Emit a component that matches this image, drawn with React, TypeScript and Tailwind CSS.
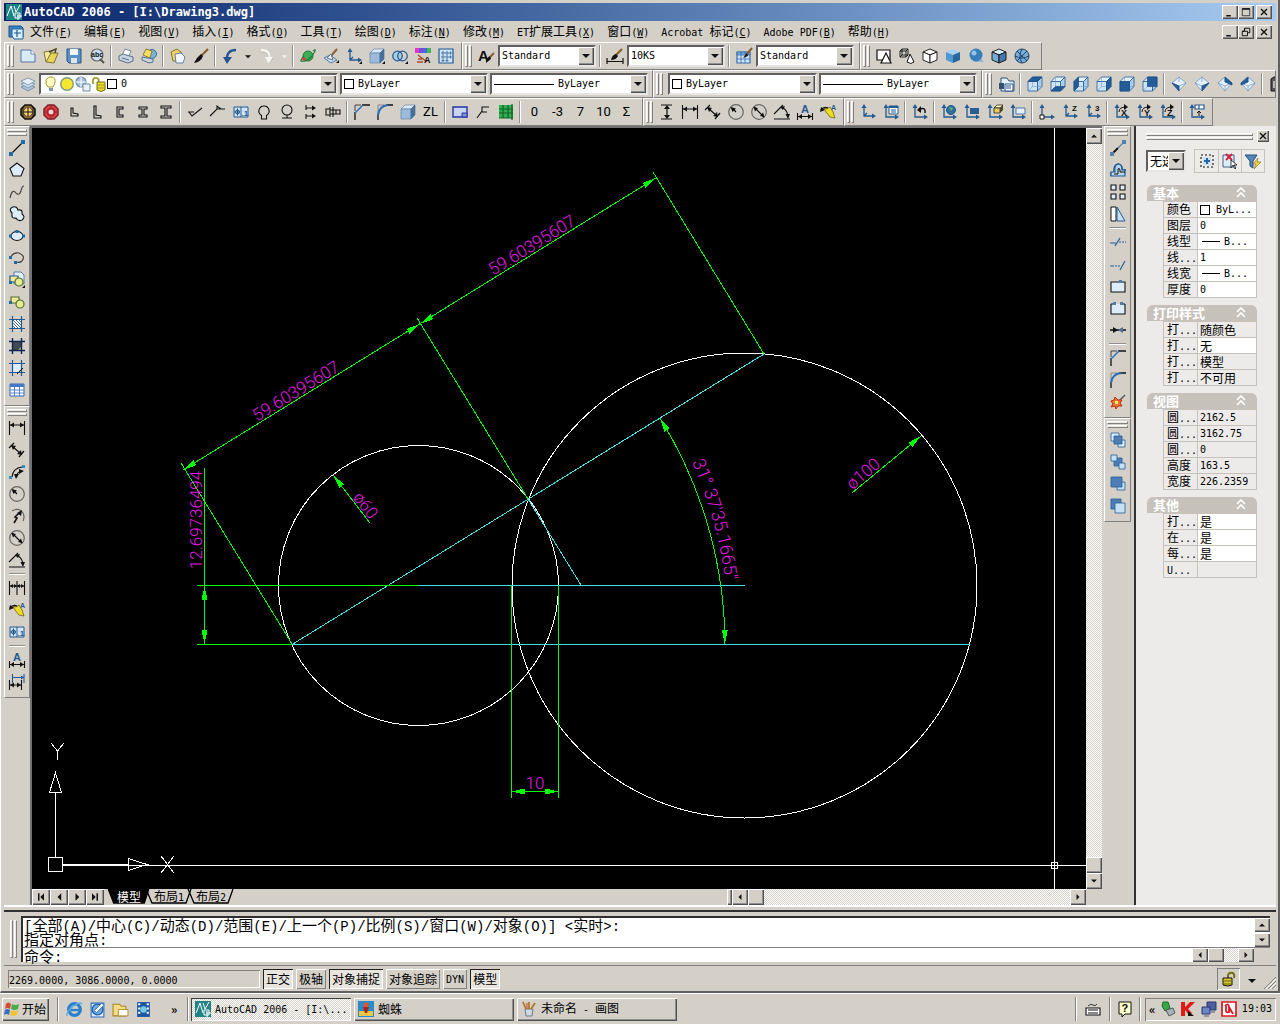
import React from "react";
import { clsx } from "clsx";

const CJK = "font-['Noto_Sans_CJK_SC',sans-serif]";
const MONO = "font-['DejaVu_Sans_Mono','Noto_Sans_CJK_SC',monospace]";
const RAISED = "bg-[#d4d0c8] shadow-[inset_1px_1px_#ffffff,inset_-1px_-1px_#505050,inset_-2px_-2px_#909090]";
const GRIP = "bg-[#ece9e3] border border-t-white border-l-white border-r-[#808080] border-b-[#808080]";
const SUNKEN = "shadow-[inset_1px_1px_#808080,inset_-1px_-1px_#ffffff]";
const DITHER = "bg-[repeating-conic-gradient(#ffffff_0_25%,#d4d0c8_0_50%)] bg-[length:2px_2px]";

/* Mixed text: Chinese at the parent's size, Latin in a narrower monospaced face. */
function T({ children, latin = "font-['DejaVu_Sans_Mono',monospace] text-[10px]" }: { children: string; latin?: string }) {
  return (
    <>
      {children.split(/([\u3000-\u9fff]+)/).map((s, i) =>
        i % 2 ? s : s ? <span key={i} className={clsx(latin, "whitespace-pre")}>{s}</span> : null
      )}
    </>
  );
}
const COMMAND_LATIN = "font-['Liberation_Mono',monospace] text-[14px]";

/* ---------- icons: [path, fill, stroke, stroke width] or a letter ---------- */
type Shape = [string, string?, string?, number?];
type Letter = { t: string; x: number; y: number; s: number; c?: string };
type Part = Shape | Letter;
const K = "#111111";
const B = "#24598f";
const D = "#235c98";
const L = "#cfe4f6";
const N = "none";
const ring = (x: number, y: number, r: number) => `M${x - r} ${y}a${r} ${r} 0 1 0 ${2 * r} 0a${r} ${r} 0 1 0 ${-2 * r} 0z`;

const ucs: Part[] = [["M4 3V12H14M4 12L7 9", N, B, 1.3], ["M4 0L6.5 4H1.500z M16 12L12 9.500V14.500z", B]];
const ucsSmall: Part[] = [["M3 3V13H14", N, B, 1.3], ["M3 0L5.500 4H.5z M16 13L12 10.500V15.500z", B]];
const box = (face: string): Part[] => [
  ["M1 5.500L5.500 1H15L10.500 5.500z", "#e4f0fa", D, 0.8],
  ["M1 5.500H10.500V15H1z", L, D, 0.8],
  ["M10.500 5.500L15 1V10.500L10.500 15z", "#a9cdec", D, 0.8],
  ["M5.500 1V10.500H15M5.500 10.500L1 15", N, "#6f9cc8", 0.6],
  [
    {
      top: "M1 5.500L5.500 1H15L10.500 5.500z",
      front: "M1 5.500H10.500V15H1z",
      right: "M10.500 5.500L15 1V10.500L10.500 15z",
      left: "M1 5.500L5.500 1V10.500L1 15z",
      bottom: "M1 15L5.500 10.500H15L10.500 15z",
      back: "M5.500 1H15V10.500H5.500z",
    }[face] ?? "",
    D,
    "#17497e",
    0.6,
  ],
];
const iso = (face: number): Part[] => [
  ["M8 1L15 7L8 15L1 7z", "#e4f0fa", "#6a96c0", 0.8],
  ["M1 7L8 10L15 7M8 10V15M8 1V6", N, "#6a96c0", 0.7],
  [["M1 7L8 10V15z", "M15 7L8 10V15z", "M8 1L15 7V9L8 6z", "M8 1L1 7V9L8 6z"][face], D, "#17497e", 0.7],
];
const cube = (top: string, left: string, right: string, line: string): Part[] => [
  ["M8 1L15 4L8 7L1 4z", top, line, 0.9],
  ["M1 4L8 7V15L1 12z", left, line, 0.9],
  ["M15 4L8 7V15L15 12z", right, line, 0.9],
];
const solid: Part[] = [["M1 5L5 1H15L11 5z", "#dceaf7", "#5f84aa", 0.7], ["M1 5H11V15H1z", "#9dbbd9", "#5f84aa", 0.7], ["M11 5L15 1V11L11 15z", "#466f9c", "#466f9c", 0.7]];
const hatch: Part[] = [["M3.500 0V16M12.500 0V16M0 3.500H16M0 12.500H16", N, B, 1.2]];
const stack = (a: string, b: string, c: string): Part[] => [["M1 1H9V9H1z", a, D, 0.8], ["M8 8H15V15H8z", b, D, 0.8], ["M4 4H12V12H4z", c, D, 0.8]];
const docket: Part[] = [["M1 3H15V13H1z", L, B, 1], ["M8 3V13M4.500 4.500V11.500M1.500 8H7", N, B, 1], [ring(4.5, 8, 2), N, B, 1], { t: ".1", x: 8.5, y: 12, s: 8, c: B }];
const jagged: Part[] = [["M4 4L7 5L10 3L13 8L15 14L10 13L6 8z", "#eedc20", "#6b6410", 0.8], ["M1 6Q4 2 8 4", N, K, 1.3], ["M0 8L1 3L5 6z", K], { t: "A", x: 11, y: 6, s: 7, c: B }];
const linear: Part[] = [["M.5 1V15M15.500 1V15M1 5H15", N, K, 1.1], ["M1 5L5 2.500V7.500zM15 5L11 2.500V7.500z", K]];
const aligned: Part[] = [["M0 6L5 1M10 15L15 9M3 4L12 12", N, K, 1.2], ["M2 3L7 4L4 8zM13 13L12 8L8 12z", K]];
const radius: Part[] = [[ring(8, 8, 7.3), N, "#666666", 1.2], ["M8 8L4 4", N, K, 1.2], ["M2.500 3L8 4.500L4.500 8z", K]];
const diameter: Part[] = [[ring(8, 8, 7.3), N, "#666666", 1.2], ["M3 3L13 13", N, K, 1.2], ["M2.500 3L7 4L4 7.500zM13.500 13L9 12L12 8.500z", K]];
const angular: Part[] = [["M0 15H16M0 10L9 1M8 3Q14 7 14 13", N, K, 1.1], ["M6 3L11 2L9 6zM14 15L11.500 10H16z", K]];
const editDim: Part[] = [{ t: "A", x: 4, y: 9, s: 11, c: B }, ["M.5 9V16M15.500 9V16M1 12.500H15", N, K, 1.1], ["M1 12.500L5 10V15zM15 12.500L11 10V15z", K]];
const chamfer: Part[] = [["M1 16V8M8 1H16", N, K, 1.3], ["M1 7V1H7", N, "#444444", 1], ["M1 9L9 1", N, "#2a6eb5", 1.5]];
const fillet: Part[] = [["M1 16V10M9 1H16", N, K, 1.3], ["M1 7V1H7", N, "#777777", 0.8], ["M1 11Q2 2 11 1", N, "#2a6eb5", 2]];
const brush: Part[] = [["M15 1L8 8", N, "#8a5a2a", 2.2], ["M8 6Q4 9 1 15Q8 14 10 8z", K]];

const ICONS: Record<string, Part[]> = {
  acad: [["M0 0H16V16H0z", "#1e8584"], ["M1 12L5 2L8 12M8 2L10 8L14 1M9 9H14V14H9zM11 12H16M12 10V16", N, "#ffffff", 1]],
  dwg: [["M1 2H13L15 4V13H1z", "#3984c6", "#1c4e80", 1], ["M4 5H15V15H6L4 12z", "#d9effb", "#20639c", 1], ["M9 6V13M6 9H13", N, B, 1.2]],
  new: [["M1 2H11L15 6V14H1z", "#d8e9f7", "#51799f", 1], ["M11 2V6H15", "#ffffff", "#51799f", 0.8]],
  open: [["M1 4L7 3L8 9L3 14z", "#f5e9a0", "#80752e", 1], ["M3 14L8 5H15L11 15z", "#e8d35b", "#80752e", 1], ["M6 4L13 1L12 5", N, "#4d4720", 1.4]],
  save: [["M1 1H15V15H3L1 13z", "#5c91c5", "#285381", 1], ["M4 1H12V7H4z", "#f1f6fa"], ["M5 10H11V15H5z", "#dce5ed"]],
  preview: [[ring(8, 7, 6), "#cbdeef", "#686868", 1.2], ["M11 11L15 15", N, "#555555", 2], { t: "abc", x: 2, y: 9, s: 7 }],
  print: [["M4 7L7 1L13 3L11 8z", "#ffffff", "#758ba3", 1], ["M1 8L5 6L15 9V13L10 15L1 12z", "#c9d6e2", "#58718c", 1], ["M4 10L11 12", N, "#58718c", 1]],
  publish: [[ring(11, 6, 4.5), "#78b3df", "#316e9e", 1], ["M2 7L5 1L11 3L9 10z", "#f6df64", "#8e7d26", 1], ["M1 9L12 11V14L8 15L1 12z", "#c9d6e2", "#58718c", 1]],
  paste: [["M1 4L7 1L12 5L9 13L3 13z", "#edd268", "#84712e", 1], ["M5 6L11 5L15 9L13 15H6z", "#eff5fa", "#6885a0", 1]],
  match: brush,
  undo: [["M14 2Q4 2 5 13", N, "#27558e", 2.5], ["M1 9H10L5 16z", "#27558e"]],
  redo: [["M3 2Q13 2 11 13", N, "#f6f5f2", 2.5], ["M7 9H15L11 16z", "#f6f5f2"], ["M3 4Q10 4 10 9M11 16L15 10", N, "#b5b1a9", 0.8]],
  drop: [["M4 7H12L8 11z", K]],
  dropOff: [["M5 7H12L8.500 11z", "#f3f1ed"]],
  orbit: [[ring(8, 8, 5), "#3dae57", "#247b3a", 1], ["M2 13Q-1 14 4 8M13 3Q18 -1 12 8Q7 14 2 13", N, "#1f7a39", 1.2], [ring(4, 11, 1.7), "#d04434"]],
  layerbrush: [["M1 10L7 7L14 12L8 15z", "#c9dff1", "#54799e", 1], ["M14 1L8 8", N, "#8a6230", 2], ["M8 6L4 10L10 12z", "#e7eef4", "#64788d", 1], ["M13 15H16V12z", K]],
  ucs: [...ucs, ["M13 16H16V13z", K]],
  solid: [...solid, ["M13 16H16V13z", K]],
  venn: [[ring(5.5, 8, 4.8), "#a9c9e5", B, 1.2], [ring(10.5, 8, 4.8), N, B, 1.2], ["M13 16H16V13z", K]],
  palette: [["M0 0H4V5H0z", "#df38c2"], ["M4 0H8V5H4z", "#7e45df"], ["M8 0H12V5H8z", "#3f6be8"], ["M12 0H16V5H12z", "#48b64e"], ["M3 7L12 14M3 11H7M2 14H8", N, "#a54b2c", 1.4], { t: "A", x: 9, y: 15, s: 9 }],
  calc: [["M1 1H15V15H1z", L, B, 1.2], ["M4 4H6V6H4zM8 4H10V6H8zM12 4H13V6H12zM4 8H6V10H4zM8 8H10V10H8zM8 12H10V13H8zM12 8H13V10H12zM4 12H6V13H4z", "#ffffff", B, 0.8]],
  textstyle: [{ t: "A", x: 0, y: 13, s: 15 }, ["M16 5L11 10", N, "#8c5c2e", 2], ["M12 8L8 11L8 15L13 11z", K]],
  dimstyle: [["M0 10V16M16 10V16M0 13.500H16", N, K, 1.2], ["M15 1L8 8", N, "#8c5c2e", 2.2], ["M9 6Q5 7 4 12Q9 12 11 8z", K]],
  tablestyle: [["M1 4H14V15H1z", L, "#386da8", 1.2], ["M1 4H14V7H1zM5 4V15M9 4V15M1 11H14", "#77a6d4", "#386da8", 0.8], ["M16 0L10 7", N, "#8c5c2e", 2], ["M11 5L7 10L12 8z", K]],
  wf2d: [["M1 2H14V12H1z", "#ffffff", K, 1.2], ["M5 15L10 5L15 15z", "#ffffff", K, 1.2]],
  wf3d: [["M1 3H7V9H1zM3 1H9V7H3zM1 3L3 1M7 3L9 1M7 9L9 7M1 9L3 7", N, K, 0.9], ["M8 14L11 6L15 14Q12 17 8 14z", "#ffffff", K, 1]],
  hidden: cube("#ffffff", "#ffffff", "#ffffff", K),
  flat: cube("#a8d0f0", "#4f98d4", "#28679f", N),
  gouraud: [["M6 14H16L13 10z", "#94b9d7"], [ring(8, 7, 6.5), "#387eb8"], [ring(6, 5, 2.5), "#8fc4e8"]],
  flatedge: cube("#d7eafa", "#76a8d8", "#4678ae", K),
  gouraudedge: [[ring(8, 8, 7), "#78add5", "#20476b", 1], ["M3 3L13 13M13 3L3 13M8 1Q4 8 8 15M1 8Q8 12 15 8", N, "#20476b", 1]],
  layers: [["M1 11L8 8L15 11L8 15z", "#afc4d8", "#6b8caa", 0.8], ["M1 8L8 5L15 8L8 12z", "#cfdeea", "#6b8caa", 0.8], ["M1 5L8 2L15 5L8 9z", "#e8f1f7", "#6b8caa", 0.8]],
  bulb: [["M5 11Q2 8 3 4Q5 0 9 1Q13 2 12 6Q12 8 10 11z", "#fffbc2", "#a29a34", 1], ["M6 12H10V15H6z", "#8595a8"]],
  sun: [[ring(8, 8, 6.3), "#f5e632", "#7c9b86", 1.4]],
  vp: [[ring(6, 6, 5), "#a7c2d8", "#6b8ba5", 1.2], ["M6 1V11M1 6H11", N, "#ffffff", 1], ["M8 8H15V15H8z", "#e9f1f7", "#6b8ba5", 1]],
  lock: [["M2 8V4Q3 1 6 2Q9 3 7 7", N, "#9d941f", 1.7], ["M6 6H14V14Q10 17 6 14z", "#e8dc2e", "#777018", 1], ["M6 9H14M6 12H14", N, "#918818", 0.8]],
  views: [["M3 2H9L11 5H16V15H3z", "#e4f0fa", "#2e527b", 1], ["M1 7H6V13H1z", "#35516e"], ["M7 8H15V15H7zM8 10H13M8 12H13", "#ffffff", B, 1]],
  vTop: box("top"), vBottom: box("bottom"), vLeft: box("left"), vRight: box("right"), vFront: box("front"), vBack: box("back"),
  sw: iso(0), se: iso(1), ne: iso(2), nw: iso(3),
  camera: [["M2 3L5 1H9V12L6 15H2z", "#555555", K, 1], ["M4 5H6V12H4z", "#b5b5b5"]],
  gearA: [["M5 1H11L15 5V11L11 15H5L1 11V5z", "#8d7038", K, 1.6], [ring(8, 8, 4.5), "#f6d481", "#6b4612", 1], ["M8 4V12M4 8H12", N, K, 1], ["M3 3V13M13 3V13", N, K, 0.8]],
  gearB: [["M5 1H11L15 5V11L11 15H5L1 11V5z", "#d94047", "#7c242a", 1.5], [ring(8, 8, 3.5), "#e8d8d4", "#b21e26", 2], ["M8 0V5M8 11V16M0 8H4M12 8H16", N, "#8b2428", 0.8]],
  angleS: [["M5 4V12H12V10L7 9V4z", N, K, 1.1]],
  angleL: [["M5 2V14H12V12L7 11V2z", N, K, 1.1]],
  channel: [["M11 3H5V13H11V11H7V5H11z", N, K, 1.1]],
  beam: [["M4 3H12V5H9V11H12V13H4V11H7V5H4z", N, K, 1.1]],
  beamW: [["M3 2H13V4H9V12H13V14H3V12H7V4H3z", N, K, 1.1]],
  rough: [["M1 8H7M2 8L5 12L15 4", N, K, 1.1]],
  weld: [["M0 12L7 5H15M7 5V2L11 5", N, K, 1.1]],
  tol: docket,
  balloon: [["M5.500 11.500Q2 9 3 6Q4 2 8 2Q12 2 13 6Q14 9 10.500 11.500V15H5.500z", N, K, 1.1]],
  balloon2: [[ring(8, 6, 5), N, K, 1.1], ["M8 11V14M3 14H13", N, K, 1.1]],
  section: [["M4 1V6M4 10V15M4 4H11M4 12H11", N, K, 1.1], ["M14 4L10 1.500V6.500zM14 12L10 9.500V14.500z", K]],
  bolt: [["M1 5H5V11H1zM5 3V13M8 3V13M5 6H15V10H5M11 6V10", N, K, 1.1]],
  chamfer, fillet, block: solid,
  sheet: [["M1 3H15V13H1z", "#c8d5f2", "#2733aa", 1.4], ["M10 9H15V13H10z", "#8295d8", "#2733aa", 1]],
  leader: [["M2 14L7 7V3H14M7 8H12", N, K, 1.1]],
  bom: [["M1 1H15V14H1z", "#2db04e"], ["M1 5H15M1 9H15M5 1V14M10 1V14M14 0V16M1 14H15", N, "#135f2a", 1.2]],
  vdim: [["M2 1H13M2 15H13M8 2V14", N, K, 1.2], ["M8 1L5 5H11zM8 15L5 11H11z", K]],
  linear, aligned, radius, diameter, angular, editDim, jagged,
  axes: ucs,
  ucsDialog: [...ucsSmall, ["M6 2H15V10H6zM8 6H13M8 8H13", "#ffffff", B, 1], ["M6 2H15V4H6z", B]],
  ucsPrev: [...ucsSmall, ["M13 9Q14 3 8 5", N, K, 1.5], ["M5 6L9 2V9z", K]],
  ucsWorld: [...ucsSmall, [ring(10, 6, 4.5), "#2f6f9b", B, 1], ["M8 3L12 4L10 7z", "#56b478"]],
  ucsObject: [...ucsSmall, ["M6 4H15V10H6z", "#2a5d93"]],
  ucsFace: [...ucsSmall, ["M7 4L10 1H16L13 4z", "#fff6bb", K, 0.7], ["M7 4H13V9H7z", "#e7ca61", K, 0.7], ["M13 4L16 1V6L13 9z", "#4d4629"]],
  ucsView: [...ucsSmall, ["M6 4H15V10H6z", "#e4f0fa", "#4e789f", 1]],
  ucsOrigin: [...ucsSmall, ["M1 11H5V15H1z", "#ffffff", K, 1]],
  ucsZ: [...ucs, { t: "Z", x: 10, y: 7, s: 8 }],
  ucs3: [...ucs, { t: "3", x: 10, y: 7, s: 8 }],
  rotX: [...ucsSmall, ["M5 8Q5 3 12 3", N, K, 1], ["M14 3L10 0V6z", K], { t: "X", x: 7, y: 12, s: 9 }],
  rotY: [...ucsSmall, ["M5 8Q5 3 12 3", N, K, 1], ["M14 3L10 0V6z", K], { t: "Y", x: 7, y: 12, s: 9 }],
  rotZ: [...ucsSmall, ["M5 8Q5 3 12 3", N, K, 1], ["M14 3L10 0V6z", K], { t: "Z", x: 7, y: 12, s: 9 }],
  ucsApply: [...ucsSmall, ["M6 1H15V5H6zM10 1V5", "#ffffff", B, 1.2], ["M10 12V7M8 9L10 7L12 9", N, K, 1]],
  line: [["M2 14L14 2", N, K, 1.2], ["M0 12H4V16H0zM12 0H16V4H12z", "#1b6fa4"]],
  polygon: [["M8 1L15 6.500L12 14H4L1 6.500z", "#dcecf9", K, 1.1]],
  spline: [["M1 14Q3 5 6 8Q10 13 12 7Q13 2 15 2", N, "#444444", 1.2]],
  cloud: [["M3 7Q-1 3 4 1Q8 0 9 4Q14 3 13 8Q17 11 13 14Q9 16 7 12Q2 13 3 7z", "#dcecf9", K, 1.1]],
  ellipse: [["M2 8a6 4.500 0 1 0 12 0a6 4.500 0 1 0 -12 0z", "#dcecf9", K, 1.1], ["M0 6.500H3V9.500H0zM13 6.500H16V9.500H13zM6.500 2H9.500V5H6.500z", "#1b6fa4"]],
  ellarc: [["M2 7Q4 2 10 3Q17 6 13 11Q11 13 7 12", N, "#444444", 1.2], ["M0 6H3V9H0zM5 11H8V14H5z", "#1b6fa4"]],
  insert: [["M5 0H12L15 3V12H5z", "#e5eff8", "#5a7e9e", 1], ["M1 4H9V10H1z", "#f2e79a", B, 1.2], [ring(10, 10, 4), "#e4eb94", "#52752c", 1.2], ["M0 9H3V12H0z", "#1b6fa4"], ["M13 16H16V13z", K]],
  makeblock: [["M2 3H10V9H2z", "#f2e79a", "#52752c", 1.2], [ring(11, 10, 4), "#e4eb94", "#52752c", 1.2], ["M0 7H3V10H0z", "#1b6fa4"]],
  hatch: [["M3.500 3.500H12.500V12.500H3.500z", "#ffffff"], ["M4 4L12 12M7 4L12 9M4 7L9 12M10 4L12 6M4 10L6 12", N, "#28598d", 0.9], ...hatch],
  gradient: [["M3 3H13V13H3z", "#424b53"], ["M8 13L13 8V13z", "#b5bd7c"], ["M3.500 0V16M12.500 0V16M0 3.500H16M0 12.500H16", N, "#10254f", 1.4]],
  region: [["M3.500 3.500H12.500V8L8 12.500H3.500z", "#dcecf9"], ...hatch, ["M8 14L14 8", N, K, 1]],
  table: [["M1 2H15V14H1z", "#ffffff", "#3566b5", 1], ["M1 2H15V5H1z", "#4778c6"], ["M1 8H15M1 11H15M5.500 5V14M10.500 5V14", N, "#5b86c8", 1]],
  arclen: [["M3 13Q4 4 13 3M7 13Q8 8 13 7", N, K, 1.2], ["M0 12H3V15H0zM13 1H16V4H13z", "#2f8ec5"], ["M7 15L5 10H10zM15 7L10 5V10z", K]],
  jogged: [["M3 3Q10 -1 14 5Q16 9 14 13", N, "#666666", 1.2], ["M5 15L8 10L6 9L10 5", N, K, 1.6], ["M13 2L12 8L8 5z", K]],
  baseline: [["M.5 1V15M8 1V15M15.500 1V15M1 6H15", N, K, 1.1], ["M1 6L4 4V8zM8 6L5 4V8zM8 6L11 4V8zM15 6L12 4V8z", K]],
  dimupdate: [["M3.500 0V9M15 0V9M4 3.500H15", N, B, 1.1], ["M.5 6V16M12.500 6V16M1 11H12", N, K, 1.1], ["M1 11L5 8.500V13.500zM12 11L8 8.500V13.500z", K], ["M15 3.500L12 1.500V5.500z", B]],
  lengthen: [["M2 14L8 8", N, K, 1.8], ["M8 8L14 2", N, "#5580aa", 1.3], ["M0 12H4V16H0zM12 0H16V4H12z", "#5580aa"]],
  offset: [["M1 14V11H4Q3 3 8 2Q13 3 12 8H16", N, B, 1.4], ["M1 14V10H5Q4 3 8 2Q12 2 12 8H15V14z", "#b6d5ef", B, 1.2], ["M4 12H8V7Q9 5 10 8V10H15", N, K, 1]],
  array: [["M1 1H6V6H1zM10 1H15V6H10zM1 10H6V15H1zM10 10H15V15H10z", "#dcecf9", K, 1.1]],
  mirror: [["M1 1H6V15H1z", "#ffffff", K, 1], ["M7 1L15 15H7z", "#c5dff3", B, 1]],
  trim: [["M0 9H6M5 12L10 4", N, "#245f9b", 1.2], ["M9 8H11M12 8H14M15 8H16", N, B, 1.2]],
  extend: [["M0 10H4M5 10H7M8 10H10M10 14L15 5", N, "#245f9b", 1.2]],
  breakpt: [["M1 4H15V14H1z", "#dcecf9", K, 1.1], ["M9 2H12V5H9z", "#4f7eae"]],
  break: [["M1 4V14H15V4", "#dcecf9", K, 1.1], ["M1 4H4M12 4H15", N, K, 1], ["M3 2H6V5H3zM10 2H13V5H10z", "#4f7eae"]],
  join: [["M0 8H16", N, K, 1.5], ["M8 8L3 5V11z", K], ["M8 8L13 5V11z", "#4c7099"]],
  explode: [["M9 7L15 1", N, "#555555", 1.5], ["M1 7L4 6L5 3L8 6L12 6L10 9L12 12L8 12L6 15L5 12L1 13L3 10z", "#ed752e", "#b72d18", 1], ["M5 7H8V10H5z", "#ffe56a"]],
  front: stack("#dcecf9", "#dcecf9", "#4f7eb5"),
  back: [["M4 4H12V12H4z", "#4f7eb5", D, 0.8], ["M1 1H7V7H1zM9 9H15V15H9z", "#c5dff3", D, 0.8]],
  above: [["M7 6H15V14H7z", "#c5dff3", D, 0.8], ["M1 1H12V11H1z", "#4f7eb5", D, 0.8]],
  under: [["M1 1H11V11H1z", "#4f7eb5", D, 0.8], ["M5 5H15V15H5z", "#c5dff3", D, 0.8]],
  pickadd: [["M2 2H4M6 2H8M10 2H12M14 2V4M14 6V8M14 10V12M14 14H12M10 14H8M6 14H4M2 14V12M2 10V8M2 6V4", N, K, 1.1], ["M4 4H12V12H4z", "#cce2f4"], ["M8 5V11M5 8H11", N, "#1e68a8", 2]],
  select: [["M1 2H12V14H1z", "#dcecf9", "#44617f", 1], ["M4 1L10 7M10 1L4 7", N, "#d51e37", 1.8], ["M9 7V15L11 12L13 16L14 15L12 12H15z", "#ffffff", K, 0.8]],
  filter: [["M0 2H12L8 8V15L5 13V8z", "#5685b8", "#244c79", 1], ["M13 5L8 11H11L9 16L16 9H12z", "#f3d63e", "#8d7722", 0.7]],
  start: [["M2 3Q4 0 7 3L6 8Q3 6 1 8z", "#d54a31"], ["M8 3Q11 5 15 3L14 8Q10 10 7 8z", "#4bac4d"], ["M1 9Q3 7 6 9L5 14Q2 12 0 14z", "#356cc8"], ["M7 9Q10 11 14 9L13 14Q9 16 6 14z", "#f1c33a"]],
  ie: [[ring(8, 8, 5.5), N, "#2a80cd", 3], ["M4 8.500H13", N, "#2a80cd", 2.2], ["M1 14Q0 10 7 5Q14 0 15 3", N, "#5aaee8", 1.3]],
  outlook: [["M2 2H14V15H2z", "#dceafb", "#2a70bf", 1], [ring(8, 8, 5), "#6eb0e6", "#1f5fa8", 1.2], ["M5 9L12 2L14 4L7 11z", "#ffffff", "#1f5fa8", 0.8]],
  folder: [["M1 3H7L9 5H13V14H1z", "#f7dc85", "#a88525", 1], ["M6 8H15V14H6z", "#ffffff", "#a88525", 0.8]],
  film: [["M2 1H14V15H2z", "#1c569e"], ["M3 2H5V4H3zM3 6H5V8H3zM3 10H5V12H3zM11 2H13V4H11zM11 6H13V8H11zM11 10H13V12H11z", "#ffffff"], [ring(8, 8, 3), "#74c9f0"]],
  spider: [["M0 0H16V16H0z", "#2b8bc4"], ["M1 10H15V15H1z", "#f0c643"], [ring(8, 4, 2.5), "#e9552c"], ["M5 6H11L9 12H7z", "#a82522"]],
  paint: [["M4 8H12L11 15H5z", "#ced9e2", "#6a7b8b", 1], ["M5 8L2 1M8 8V1M10 8L14 2", N, "#b2762b", 1.8], ["M6 8L6 2", N, "#d05738", 1.2]],
  keyboard: [["M1 7H15V14H1z", "#ffffff", K, 1.1], ["M3 9H13M3 12H13", N, K, 1], ["M3 5Q6 2 8 4Q10 6 12 3", N, K, 0.8]],
  help: [["M2 1H14V13H8L5 16V13H2z", "#ffffcc", K, 1], { t: "?", x: 4.5, y: 11, s: 11 }],
  usb: [["M3 1H8L10 7L5 10L2 5z", "#37a947", "#1e6830", 1], ["M6 9L13 7L15 12L9 15z", "#a9b1b7", "#525b61", 1]],
  kav: [["M1 1H5V6L10 1H15L8 8L12 12L9 14L5 9V15H1z", "#df1919"], ["M8 10L14 15H8z", K]],
  net: [["M6 1H15V9H6z", "#4c5fa4", "#2c366a", 1], ["M1 6H9V13H1z", "#6b85c8", "#2c366a", 1], ["M3 15H8M10 11H14", N, "#555f79", 1.2]],
  rising: [["M1 1H15V15H1z", "#ffffff", "#d91a25", 1.7], ["M4 5Q8 1 8 7V12M8 6L12 13M5 5V10Q5 12 8 11", N, "#d91a25", 1.8]],
  padlock: [["M7 8V4Q8 1 12 2Q14 4 13 7", N, "#77701b", 2], ["M2 7H11V14Q7 16 2 14z", "#d9cb28", K, 1], ["M2 10H11M2 13H11", N, "#665f12", 1]],
  chevrons: [["M4 7L8 3L12 7M4 12L8 8L12 12", N, "#ffffff", 1.6]],
  min: [["M3 12H9V14H3z", K]],
  max: [["M3 3.500H13V13H3z", N, K, 1], ["M3 3H13V5H3z", K]],
  restore: [["M6 3H13V9H10V13H3V7H6zM3 7H10V9M6 7V3", N, K, 1.3]],
  close: [["M4 4L12 12M12 4L4 12", N, K, 1.8]],
  up: [["M4 10H12L8 6z", K]],
  down: [["M4 6H12L8 10z", K]],
  left: [["M10 4V12L6 8z", K]],
  right: [["M6 4V12L10 8z", K]],
  first: [["M4 3H6V13H4zM12 3V13L7 8z", K]],
  last: [["M10 3H12V13H10zM4 3V13L9 8z", K]],
  prev: [["M11 3V13L6 8z", K]],
  next: [["M6 3V13L11 8z", K]],
};

function Icon({ name, className = "size-4" }: { name: string; className?: string }) {
  return (
    <svg viewBox="0 0 16 16" className={clsx("shrink-0 overflow-visible", className)} aria-hidden="true">
      {ICONS[name].map((p, i) =>
        Array.isArray(p) ? (
          <path key={i} d={p[0]} fill={p[1] ?? N} stroke={p[2] ?? N} strokeWidth={p[3] ?? 1} />
        ) : (
          <text key={i} x={p.x} y={p.y} fontSize={p.s} fill={p.c ?? K} fontWeight="bold" fontFamily="Liberation Sans, sans-serif">{p.t}</text>
        )
      )}
    </svg>
  );
}

/* ---------- toolbars ---------- */
function Bar({ children, vertical = false, grow = false }: { children: React.ReactNode; vertical?: boolean; grow?: boolean }) {
  return (
    <div
      className={clsx(
        "flex items-center border border-t-white border-l-white border-r-[#808080] border-b-[#808080]",
        vertical ? "w-full flex-col pb-1" : "h-7 pr-1",
        grow ? "min-w-0 flex-1 overflow-hidden" : "shrink-0"
      )}
    >
      <div className={clsx("flex shrink-0 gap-px", vertical ? "h-[10px] w-full flex-col px-0.5 pt-0.5" : "h-full w-[11px] py-0.5 pl-0.5")}>
        <i className={clsx(GRIP, vertical ? "h-[3px]" : "w-[3px]")} />
        <i className={clsx(GRIP, vertical ? "h-[3px]" : "w-[3px]")} />
      </div>
      {children}
    </div>
  );
}

/* "|" is a separator; a leading "=" makes a text button. */
function Tools({ items, vertical = false }: { items: string; vertical?: boolean }) {
  return (
    <>
      {items.split(" ").map((n, i) =>
        n === "|" ? (
          <i key={i} className={clsx("flex shrink-0 items-center justify-center", vertical ? "h-1.5 w-full px-1" : "h-full w-1.5 py-0.5")}>
            <i className={clsx(vertical ? "h-0.5 w-full border-t border-b border-t-[#909090] border-b-white" : "h-full w-0.5 border-r border-l border-l-[#909090] border-r-white")} />
          </i>
        ) : (
          <button
            key={i}
            type="button"
            aria-label={n.replace("=", "")}
            className={clsx("flex shrink-0 items-center justify-center", vertical ? "h-[22px] w-6" : n.startsWith("drop") ? "h-6 w-[13px]" : "h-6 w-[23px]")}
          >
            {n.startsWith("=") ? <span className="font-['Roboto',sans-serif] text-[13px] leading-4">{n.slice(1)}</span> : <Icon name={n} className={n.startsWith("drop") ? "size-3" : "size-4"} />}
          </button>
        )
      )}
    </>
  );
}

const Swatch = () => <i className="size-[10px] shrink-0 border border-black bg-white" />;
const Rule = () => <i className="h-px w-[60px] shrink-0 bg-black" />;

function Combo({ value, label, className, pre, cjk = false }: { value: string; label: string; className: string; pre?: React.ReactNode; cjk?: boolean }) {
  return (
    <div className={clsx("flex h-[22px] shrink-0 items-center border-2 border-t-[#606060] border-l-[#606060] border-r-[#e8e6e2] border-b-[#e8e6e2] bg-white pl-0.5", className)}>
      {pre && <span className="mr-1 flex shrink-0 items-center">{pre}</span>}
      <select aria-label={label} className={clsx("h-full min-w-0 flex-1 appearance-none bg-white", cjk ? "font-['Noto_Sans_CJK_SC',sans-serif] text-[12px]" : "font-['DejaVu_Sans_Mono',monospace] text-[10px]")}>
        <option>{value}</option>
      </select>
      <span className={clsx("pointer-events-none flex h-full w-4 shrink-0 items-center justify-center", RAISED)}>
        <Icon name="down" className="size-4" />
      </span>
    </div>
  );
}

function Btn({ icon, label, className = "size-4" }: { icon?: string; label: string; className?: string }) {
  return (
    <button type="button" aria-label={label} className={clsx("flex shrink-0 items-center justify-center", RAISED, className)}>
      {icon && <Icon name={icon} className="size-3" />}
    </button>
  );
}

/* ---------- drawing ---------- */
function arrow(x: number, y: number, deg: number) {
  return <path key={`${x},${y},${deg}`} d="M0 0L-14 -3V3z" fill="#00ff00" transform={`translate(${x} ${y}) rotate(${deg})`} />;
}

function Drawing() {
  return (
    <svg viewBox="32 128 1054 761" className="h-full w-full" fill="none" shapeRendering="crispEdges" role="img" aria-label="模型空间">
      <g stroke="#ffffff">
        <circle cx="418.5" cy="585.5" r="140" />
        <circle cx="744.5" cy="585.5" r="232.500" />
        <path d="M1054.500 127V890M62 865.500H1087M1051.500 862.500h6v6h-6zM48.500 857.500h14v14h-14zM55.500 857V792M62 864.500H129M49.500 792.500H61.500L55.500 773zM128.500 858.500V870.500L147 864.500zM51 743L57.500 751L64 743M57.500 751V760M161 856L174 873M174 856L161 873" />
      </g>
      <path stroke="#40e0e0" d="M292 644.500L764 354M292 644.500H970M528 499L581 585M418 585.500H745" />
      <path
        stroke="#00ff00"
        d="M197 585.500H418M197 644.500H292M204.500 468V644M181 463L292 644M183 470L656 178M417 318L528 499M653 172L764 354M511.500 585V798M558.500 585V798M511 791.500H558M333 475L370 523M921 436L852 493M660 418A432 432 0 0 1 725 644"
      />
      {arrow(183, 470, 148)}
      {arrow(420, 324, -32)}
      {arrow(420, 324, 148)}
      {arrow(656, 178, -32)}
      {arrow(204.5, 586, -90)}
      {arrow(204.5, 644, 90)}
      {arrow(511, 791.5, 180)}
      {arrow(559, 791.5, 0)}
      {arrow(333, 475, -128)}
      {arrow(921, 436, -40)}
      {arrow(660, 418, -120)}
      {arrow(725, 644, 89)}
      <path id="angle-baseline" d="M692 462A437 437 0 0 1 729 644" />
      <g fill="#e619e6" fontFamily="Roboto, sans-serif" fontWeight="300" fontSize="17" textAnchor="middle">
        <text transform="translate(299 396) rotate(-31.600)">59.60395607</text>
        <text transform="translate(535 250) rotate(-31.600)">59.60395607</text>
        <text transform="translate(202 520) rotate(-90)">12.69736494</text>
        <text transform="translate(361 509) rotate(52)">ø60</text>
        <text transform="translate(867 478) rotate(-40)">ø100</text>
        <text x="535" y="789">10</text>
        <text textAnchor="start" fontSize="18"><textPath href="#angle-baseline">31° 37'35.1665"</textPath></text>
      </g>
    </svg>
  );
}

/* ---------- properties palette ---------- */
type Row = [string, string, boolean, ("swatch" | "line")?];
const GROUPS: { title: string; rows: Row[] }[] = [
  { title: "基本", rows: [["颜色", "ByL...", true, "swatch"], ["图层", "0", true], ["线型", "B...", true, "line"], ["线...", "1", true], ["线宽", "B...", true, "line"], ["厚度", "0", true]] },
  { title: "打印样式", rows: [["打...", "随颜色", false], ["打...", "无", true], ["打...", "模型", false], ["打...", "不可用", false]] },
  { title: "视图", rows: [["圆...", "2162.5", false], ["圆...", "3162.75", false], ["圆...", "0", false], ["高度", "163.5", false], ["宽度", "226.2359", false]] },
  { title: "其他", rows: [["打...", "是", true], ["在...", "是", true], ["每...", "是", true], ["U...", "", false]] },
];

function Palette() {
  return (
    <aside className="flex w-[142px] shrink-0 flex-col border-l-2 border-[#303030] bg-[#ecebe9] pr-[19px] pl-[10px]">
      <div className="-mr-3 flex h-5 items-center gap-1">
        <div className="flex flex-1 flex-col gap-px">
          <i className={clsx("h-[3px]", GRIP)} />
          <i className={clsx("h-[3px]", GRIP)} />
        </div>
        <Btn icon="close" label="关闭特性" className="size-3" />
      </div>
      <div className="-mr-2 mt-[3px] mb-3 flex h-6 items-center justify-between">
        <Combo value="无选择" label="选择" className="w-10" cjk />
        <div className="flex border border-[#c8c4bc]">
          {["pickadd", "select", "filter"].map((n) => (
            <button key={n} type="button" aria-label={n} className="flex h-[22px] w-[23px] items-center justify-center border-l border-[#c8c4bc] first:border-l-0">
              <Icon name={n} />
            </button>
          ))}
        </div>
      </div>
      <div className="flex flex-col gap-2 pl-px">
        {GROUPS.map((g) => (
          <section key={g.title}>
            <h2 className="flex h-4 items-center justify-between rounded-t-md bg-[#c6c2bb] pr-2 pl-1.5 text-[13px] leading-4 font-bold text-white">
              {g.title}
              <button type="button" aria-label={`折叠${g.title}`}><Icon name="chevrons" /></button>
            </h2>
            <table className="-mb-px ml-4 w-[94px] table-fixed border-collapse">
              <tbody>
                {g.rows.map(([k, v, edit, mark], i) => (
                  <tr key={i} className="h-4">
                    <th className="h-4 w-[34px] border border-[#c6c2bb] p-0 pl-[3px] text-left font-normal whitespace-nowrap"><div className="h-[15px] leading-[14px]"><T>{k}</T></div></th>
                    <td className={clsx("h-4 border border-[#c6c2bb] p-0 pl-0.5 whitespace-nowrap", edit && "bg-white")}>
                      <div className="flex h-[15px] items-center leading-[14px]">
                        {mark === "swatch" && <i className="mr-1.5 size-[10px] shrink-0 border border-black" />}
                        {mark === "line" && <i className="mr-1 ml-0.5 h-px w-[18px] shrink-0 bg-black" />}
                        <T>{v}</T>
                      </div>
                    </td>
                  </tr>
                ))}
              </tbody>
            </table>
          </section>
        ))}
      </div>
    </aside>
  );
}

const MENUS: [string, string][] = [
  ["文件", "F"], ["编辑", "E"], ["视图", "V"], ["插入", "I"], ["格式", "O"], ["工具", "T"], ["绘图", "D"], ["标注", "N"],
  ["修改", "M"], ["ET扩展工具", "X"], ["窗口", "W"], ["Acrobat 标记", "C"], ["Adobe PDF", "B"], ["帮助", "H"],
];
const MODES: [string, boolean][] = [["正交", true], ["极轴", false], ["对象捕捉", true], ["对象追踪", false], ["DYN", false], ["模型", true]];

function WindowButtons({ mid }: { mid: string }) {
  return (
    <div className="flex shrink-0">
      <Btn icon="min" label="最小化" className="h-[14px] w-4" />
      <Btn icon={mid} label="还原" className="h-[14px] w-4" />
      <Btn icon="close" label="关闭" className="ml-0.5 h-[14px] w-4" />
    </div>
  );
}

function LayoutTab({ name, active = false }: { name: string; active?: boolean }) {
  return (
    <button type="button" className={clsx("relative flex h-[15px] items-center justify-center leading-none", active ? "w-[38px] text-white" : "w-[42px] text-black")}>
      <svg viewBox="0 0 42 15" preserveAspectRatio="none" className="absolute inset-0 h-full w-full overflow-visible" aria-hidden="true">
        <path d="M-2 0L4 14H38L43 0" fill={active ? "#000000" : "none"} stroke="#000000" strokeWidth="1.3" />
      </svg>
      <span className="relative"><T>{name}</T></span>
    </button>
  );
}

function Task({ icon, name, active = false }: { icon: string; name: string; active?: boolean }) {
  return (
    <button
      type="button"
      className={clsx("flex h-[23px] w-40 min-w-0 items-center gap-1 pl-1 text-left whitespace-nowrap", active ? clsx(DITHER, "shadow-[inset_1px_1px_#404040,inset_-1px_-1px_#ffffff]") : RAISED)}
    >
      <Icon name={icon} />
      <span><T>{name}</T></span>
    </button>
  );
}

const Divider = () => <i className="h-6 w-0.5 shrink-0 border-r border-l border-l-[#808080] border-r-white" />;

export default function App() {
  return (
    <div className={clsx("flex h-screen flex-col overflow-hidden bg-[#d4d0c8] text-[12px] leading-4 text-black", CJK)}>
      <div className="flex min-h-0 flex-1 flex-col border-r-2 border-b-2 border-l border-r-[#606060] border-b-[#606060] border-l-white pt-[3px] pr-0.5 pl-[3px]">
        <header className="flex h-[18px] shrink-0 items-center bg-linear-to-r from-[#0a246a] to-[#a6caf0] pr-1 pl-0.5">
          <Icon name="acad" />
          <h1 className="ml-0.5 flex-1 font-['DejaVu_Sans_Mono',monospace] text-[12px] leading-4 font-bold text-white">AutoCAD 2006 - [I:\Drawing3.dwg]</h1>
          <WindowButtons mid="max" />
        </header>

        <nav className="flex h-[21px] shrink-0 items-center pr-1 pl-1">
          <Icon name="dwg" />
          <div className="ml-1.5 flex flex-1 gap-3">
            {MENUS.map(([m, k]) => (
              <button key={m} type="button" className="whitespace-nowrap">
                <T>{m}</T>
                <span className={clsx(MONO, "text-[10px]")}>(<u>{k}</u>)</span>
              </button>
            ))}
          </div>
          <WindowButtons mid="restore" />
        </nav>

        <div className="flex h-7 shrink-0">
          <Bar><Tools items="new open save preview | print publish | paste match | undo drop redo dropOff | orbit layerbrush ucs solid venn palette calc" /></Bar>
          <Bar>
            <Tools items="textstyle" />
            <Combo value="Standard" label="文字样式" className="mx-px w-[98px]" />
            <Tools items="| dimstyle" />
            <Combo value="10KS" label="标注样式" className="mx-px w-[98px]" />
            <Tools items="| tablestyle" />
            <Combo value="Standard" label="表格样式" className="mx-px w-[98px]" />
          </Bar>
          <Bar><Tools items="wf2d wf3d hidden flat gouraud flatedge gouraudedge" /><i className="w-1" /></Bar>
        </div>

        <div className="flex h-7 min-w-0 shrink-0">
          <Bar>
            <Tools items="layers" />
            <div className="flex gap-0.5">
              <Combo value="0" label="图层" className="w-[299px]" pre={<><Icon name="bulb" /><Icon name="sun" /><Icon name="vp" /><Icon name="lock" /><Swatch /></>} />
              <Combo value="ByLayer" label="颜色" className="w-[148px]" pre={<Swatch />} />
              <Combo value="ByLayer" label="线型" className="w-[158px]" pre={<Rule />} />
            </div>
          </Bar>
          <Bar>
            <div className="ml-[3px] flex gap-0.5">
              <Combo value="ByLayer" label="打印颜色" className="w-[149px]" pre={<Swatch />} />
              <Combo value="ByLayer" label="线宽" className="w-[158px]" pre={<Rule />} />
            </div>
          </Bar>
          <Bar grow><Tools items="views | vTop vBottom vLeft vRight vFront vBack | sw se ne nw | camera" /></Bar>
        </div>

        <div className="flex h-7 shrink-0">
          <Bar><Tools items="gearA gearB angleS angleL channel beam beamW | rough weld tol balloon balloon2 section bolt | chamfer fillet block =ZL | sheet leader bom | =0 =-3 =7 =10 =Σ" /></Bar>
          <Bar><Tools items="vdim linear aligned radius diameter angular editDim jagged" /></Bar>
          <Bar><Tools items="axes ucsDialog | ucsPrev | ucsWorld ucsObject ucsFace ucsView | ucsOrigin ucsZ ucs3 | rotX rotY rotZ | ucsApply" /></Bar>
        </div>

        <main className="flex min-h-0 flex-1">
          <div className="flex w-[26px] shrink-0 flex-col">
            <Bar vertical><Tools vertical items="line polygon spline cloud ellipse ellarc insert makeblock hatch gradient region table" /></Bar>
            <Bar vertical><Tools vertical items="linear aligned arclen radius jogged diameter angular | baseline jagged tol | editDim dimupdate" /></Bar>
          </div>
          <div className="flex min-w-0 flex-1 flex-col border-t-2 border-l-2 border-[#707070]">
            <div className="flex min-h-0 flex-1">
              <div className="min-w-0 flex-1 overflow-hidden bg-black"><Drawing /></div>
              <div className={clsx("flex w-4 shrink-0 flex-col", DITHER)}>
                <Btn icon="up" label="向上滚动" />
                <Btn label="垂直滑块" className="mt-auto size-4" />
                <Btn icon="down" label="向下滚动" />
              </div>
            </div>
            <div className="flex h-4 shrink-0 items-start">
              {["first", "prev", "next", "last"].map((n) => <Btn key={n} icon={n} label={n} className="h-4 w-[18px]" />)}
              <div className="ml-1.5 flex">
                <LayoutTab name="模型" active />
                <LayoutTab name="布局1" />
                <LayoutTab name="布局2" />
              </div>
              <div className={clsx("mr-4 ml-auto flex w-[359px]", DITHER)}>
                <Btn label="分割条" className="h-4 w-[5px]" />
                <Btn icon="left" label="向左滚动" />
                <Btn label="水平滑块" />
                <Btn icon="right" label="向右滚动" className="ml-auto size-4" />
              </div>
            </div>
          </div>
          <div className="mr-[3px] ml-0.5 flex w-[27px] shrink-0 flex-col">
            <Bar vertical><Tools vertical items="lengthen offset array mirror | trim extend breakpt break join | chamfer fillet explode" /></Bar>
            <Bar vertical><Tools vertical items="front back above under" /></Bar>
          </div>
          <Palette />
        </main>

        <div className="h-[7px] shrink-0 border-t-2 border-b-2 border-t-white border-b-[#303030]" />

        <section className="flex h-[54px] shrink-0 border-b border-[#808080] pt-1 pr-1.5 pb-[3px] pl-1" aria-label="命令行">
          <div className="flex w-[13px] gap-px py-1 pl-0.5">
            <i className={clsx("w-[3px]", GRIP)} />
            <i className={clsx("w-[3px]", GRIP)} />
          </div>
          <div className="flex min-w-0 flex-1 flex-col border-t-2 border-l-2 border-[#303030] bg-white">
            <div className="flex h-[30px] shrink-0 border-b border-[#808080]">
              <div className="min-w-0 flex-1 pl-px text-[15px] leading-[14px] whitespace-nowrap">
                <p className="h-[14px]"><T latin={COMMAND_LATIN}>[全部(A)/中心(C)/动态(D)/范围(E)/上一个(P)/比例(S)/窗口(W)/对象(O)] &lt;实时&gt;:</T></p>
                <p className="h-[14px]"><T latin={COMMAND_LATIN}>指定对角点:</T></p>
              </div>
              <div className="flex flex-col justify-between">
                <Btn icon="up" label="上一行" className="h-[14px] w-4" />
                <Btn icon="down" label="下一行" className="h-[14px] w-4" />
              </div>
            </div>
            <div className="flex min-h-0 flex-1">
              <label htmlFor="command" className="pl-px text-[15px] leading-[15px]"><T latin={COMMAND_LATIN}>命令:</T></label>
              <input id="command" className="min-w-0 flex-1 bg-white pl-1 text-[13px] outline-none" />
              <div className={clsx("flex w-[62px]", DITHER)}>
                <Btn icon="left" label="命令左移" className="h-[14px] w-4" />
                <Btn label="命令滑块" className="h-[14px] w-4" />
                <Btn icon="right" label="命令右移" className="ml-auto h-[14px] w-4" />
              </div>
              <i className="w-4 bg-[#d4d0c8]" />
            </div>
          </div>
        </section>

        <footer className="flex h-[25px] shrink-0 items-center gap-[3px] pl-1">
          <output className={clsx("h-[18px] w-[252px] pl-px leading-[18px]", SUNKEN)}><T>2269.0000, 3086.0000, 0.0000</T></output>
          {MODES.map(([m, on]) => (
            <button
              key={m}
              type="button"
              aria-pressed={on}
              className={clsx("h-5 px-[3px] leading-4", on ? "bg-[#e8e5df] shadow-[inset_1px_1px_#202020,inset_-1px_-1px_#ffffff]" : "shadow-[inset_1px_1px_#ffffff,inset_-1px_-1px_#808080]")}
            >
              <T>{m}</T>
            </button>
          ))}
          <div className="ml-auto flex items-center">
            <button type="button" aria-label="锁定工具栏" className={clsx("flex h-[22px] w-[23px] items-center justify-center", SUNKEN)}><Icon name="padlock" /></button>
            <button type="button" aria-label="状态栏菜单" className="mt-1 ml-1"><Icon name="down" /></button>
            <svg viewBox="0 0 12 12" className="mt-2 ml-1 size-3" aria-hidden="true"><path d="M0 12L12 0M4 12L12 4M8 12L12 8" stroke="#808080" /><path d="M1 13L13 1M5 13L13 5M9 13L13 9" stroke="#ffffff" /></svg>
          </div>
        </footer>
      </div>

      <div className="flex h-[31px] shrink-0 items-center border-t border-white pr-1 pl-0.5">
        <button type="button" className={clsx("flex h-[23px] w-[47px] items-center gap-0.5 pl-0.5", RAISED)}><Icon name="start" />开始</button>
        <i className="w-2" />
        <Divider />
        <div className="flex w-[128px] items-center pl-1">
          {["ie", "outlook", "folder", "film"].map((n) => (
            <button key={n} type="button" aria-label={n} className="flex w-[23px] justify-center"><Icon name={n} className="size-[17px]" /></button>
          ))}
          <span className="ml-4 font-bold">»</span>
        </div>
        <Divider />
        <div className="ml-0.5 flex min-w-0 flex-1 gap-[3px]">
          <Task icon="acad" name="AutoCAD 2006 - [I:\..." active />
          <Task icon="spider" name="蜘蛛" />
          <Task icon="paint" name="未命名 - 画图" />
        </div>
        <Divider />
        <button type="button" aria-label="输入法" className="mx-2"><Icon name="keyboard" /></button>
        <Divider />
        <button type="button" aria-label="帮助" className="mx-1.5"><Icon name="help" /></button>
        <Divider />
        <div className={clsx("ml-1 flex h-[23px] w-[131px] items-center justify-between px-1", SUNKEN)}>
          <span className="font-bold">«</span>
          <Icon name="usb" /><Icon name="kav" /><Icon name="net" /><Icon name="rising" />
          <time className={clsx(MONO, "text-[10px]")}>19:03</time>
        </div>
      </div>
    </div>
  );
}
